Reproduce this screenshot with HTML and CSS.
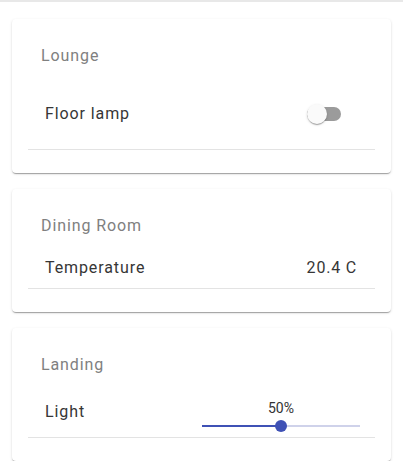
FILE: index.html
```html
<!DOCTYPE html>
<html>
<head>
<meta charset="utf-8">
<link rel="stylesheet" href="styles.css">
</head>
<body>
<div class="topbar"></div>
<main class="page">
  <section class="card">
    <div class="card-title">Lounge</div>
    <div class="row row-switch">
      <span class="row-label">Floor lamp</span>
      <span class="switch"><span class="switch-track"></span><span class="switch-thumb"></span></span>
    </div>
    <div class="divider"></div>
  </section>
  <section class="card">
    <div class="card-title">Dining Room</div>
    <div class="row row-text">
      <span class="row-label">Temperature</span>
      <span class="row-value">20.4 C</span>
    </div>
    <div class="divider"></div>
  </section>
  <section class="card">
    <div class="card-title">Landing</div>
    <div class="row row-slider">
      <span class="row-label">Light</span>
      <div class="slider">
        <div class="slider-value" style="left:50%">50%</div>
        <div class="slider-rail">
          <div class="slider-track" style="width:50%"></div>
          <div class="slider-thumb" style="left:50%"></div>
        </div>
      </div>
    </div>
    <div class="divider"></div>
  </section>
</main>
</body>
</html>
```
FILE: styles.css
```css
* { box-sizing: border-box; }
html, body { margin: 0; padding: 0; background: #ffffff; }
body {
  font-family: Roboto, "Liberation Sans", Arial, sans-serif;
  color: #333333;
}
.topbar {
  height: 2px;
  background: #e8e8e8;
}
.page {
  padding: 17px 12px 0;
  display: flex;
  flex-direction: column;
  gap: 16px;
}
.card {
  background: #fff;
  border-radius: 4px;
  box-shadow: 0 2px 1px -1px rgba(0,0,0,.2), 0 1px 1px 0 rgba(0,0,0,.14), 0 1px 3px 0 rgba(0,0,0,.12);
  padding: 16px 16px 23px;
}
.card-title {
  padding: 11px 13px;
  line-height: 20px;
  font-size: 16px;
  letter-spacing: 0.9px;
  color: #808080;
}
.row {
  display: flex;
  align-items: center;
  justify-content: space-between;
  padding-left: 17px;
}
.row-label {
  font-size: 16px;
  letter-spacing: 0.9px;
  color: #363636;
}
.row-switch { height: 72px; padding-right: 34px; }
.row-text { height: 41px; padding-right: 18px; }
.row-slider { height: 51px; padding-right: 15px; }
.row-value {
  font-size: 16px;
  letter-spacing: 0.8px;
  color: #363636;
}
.divider {
  height: 1px;
  background: #e3e3e3;
}
.switch {
  position: relative;
  width: 34px;
  height: 20px;
  margin-top: 2px;
}
.switch-track {
  position: absolute;
  left: 0;
  top: 3px;
  width: 34px;
  height: 14px;
  border-radius: 7px;
  background: #9b9b9b;
}
.switch-thumb {
  position: absolute;
  left: 0;
  top: 0;
  width: 20px;
  height: 20px;
  border-radius: 50%;
  background: #fafafa;
  box-shadow: 0 2px 1px -1px rgba(0,0,0,.2), 0 1px 1px 0 rgba(0,0,0,.14), 0 1px 3px 0 rgba(0,0,0,.12);
}
.slider {
  position: relative;
  width: 158px;
  align-self: flex-start;
  padding-top: 31px;
}
.slider-value {
  position: absolute;
  top: 14px;
  transform: translateX(-50%);
  font-size: 14px;
  line-height: 17px;
  color: #333333;
}
.slider-rail {
  position: relative;
  height: 12px;
  margin-top: 3px;
}
.slider-rail::before {
  content: "";
  position: absolute;
  left: 0;
  right: 0;
  top: 5px;
  height: 2px;
  background: #cfd2ea;
}
.slider-track {
  position: absolute;
  left: 0;
  top: 5px;
  height: 2px;
  background: #3f51b5;
}
.slider-thumb {
  position: absolute;
  top: 0;
  width: 12px;
  height: 12px;
  margin-left: -6px;
  border-radius: 50%;
  background: #3f51b5;
}
```
